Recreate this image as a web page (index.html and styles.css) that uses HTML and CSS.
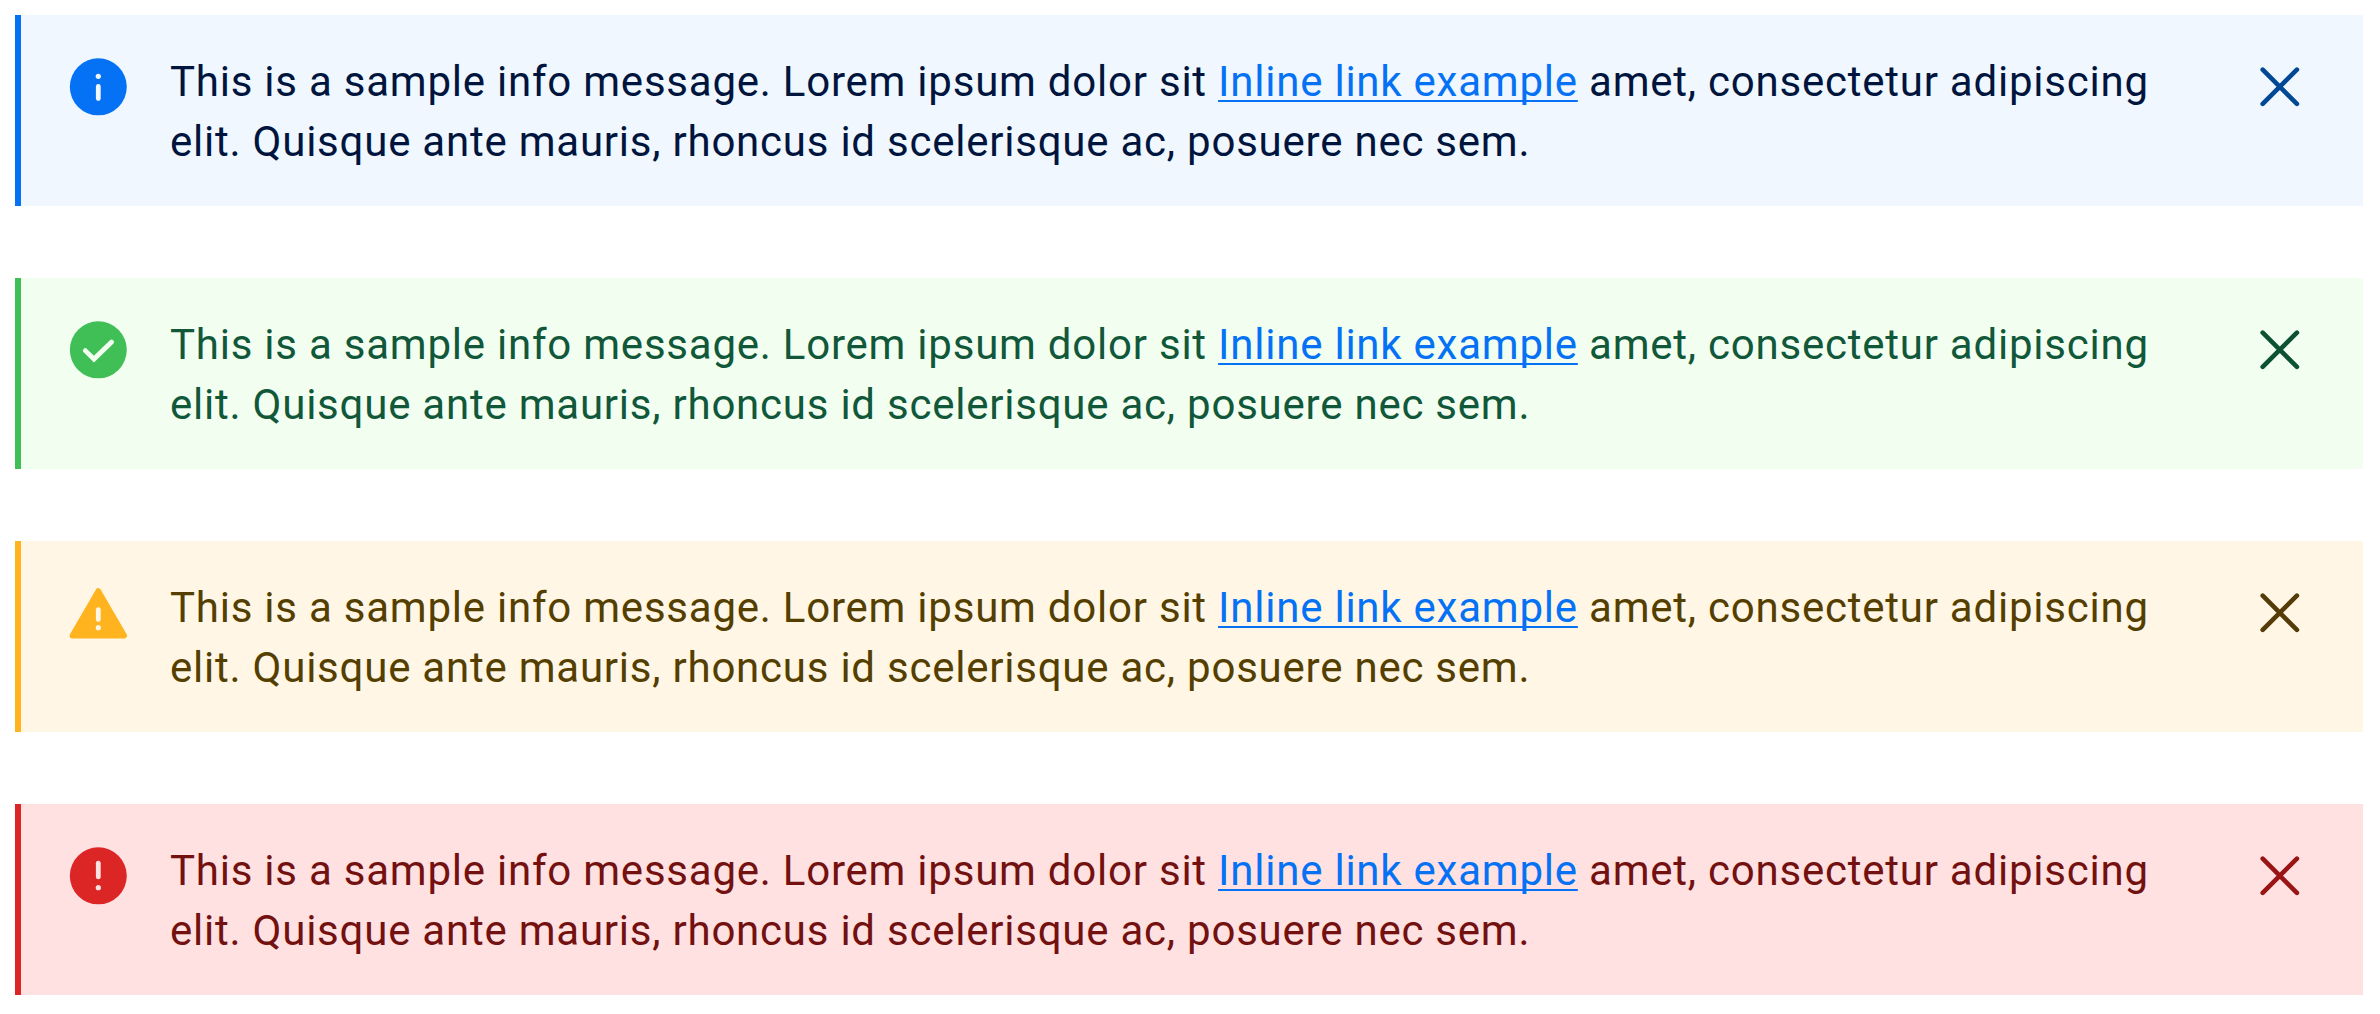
FILE: index.html
```html
<!DOCTYPE html>
<html lang="en">
<head>
<meta charset="utf-8">
<title>Alerts</title>
<link rel="stylesheet" href="styles.css">
</head>
<body>
<main class="alerts">
<section class="alert info">
<svg class="icon" viewBox="0 0 58 58"><circle class="shape" cx="29.3" cy="28.8" r="28.5"/><path class="mark" d="M29.3 28.4v12.2"/><circle class="dot" cx="29.3" cy="18.3" r="2.6"/></svg>
<p class="message">This is a sample info message. Lorem ipsum dolor sit <a class="link" href="#">Inline link example</a> amet, consectetur adipiscing elit. Quisque ante mauris, rhoncus id scelerisque ac, posuere nec sem.</p>
<button class="close" aria-label="Close"><svg class="cross" viewBox="0 0 40 40"><path d="M2.7 2.7l34.2 34.2M36.9 2.7L2.7 36.9"/></svg></button>
</section>
<section class="alert success">
<svg class="icon" viewBox="0 0 58 58"><circle class="shape" cx="29.3" cy="28.8" r="28.5"/><path class="mark" d="M16.3 29.6l8.7 8.5 17.6-17"/></svg>
<p class="message">This is a sample info message. Lorem ipsum dolor sit <a class="link" href="#">Inline link example</a> amet, consectetur adipiscing elit. Quisque ante mauris, rhoncus id scelerisque ac, posuere nec sem.</p>
<button class="close" aria-label="Close"><svg class="cross" viewBox="0 0 40 40"><path d="M2.7 2.7l34.2 34.2M36.9 2.7L2.7 36.9"/></svg></button>
</section>
<section class="alert warning">
<svg class="icon" viewBox="0 0 58 58"><path class="shape rounded" d="M29.3 6.9L55.3 51.7H3.3z"/><path class="mark" d="M29.3 25.6v10"/><circle class="dot" cx="29.3" cy="43.7" r="2.6"/></svg>
<p class="message">This is a sample info message. Lorem ipsum dolor sit <a class="link" href="#">Inline link example</a> amet, consectetur adipiscing elit. Quisque ante mauris, rhoncus id scelerisque ac, posuere nec sem.</p>
<button class="close" aria-label="Close"><svg class="cross" viewBox="0 0 40 40"><path d="M2.7 2.7l34.2 34.2M36.9 2.7L2.7 36.9"/></svg></button>
</section>
<section class="alert error">
<svg class="icon" viewBox="0 0 58 58"><circle class="shape" cx="29.3" cy="28.8" r="28.5"/><path class="mark" d="M29.3 16.2v13.7"/><circle class="dot" cx="29.3" cy="40.7" r="2.6"/></svg>
<p class="message">This is a sample info message. Lorem ipsum dolor sit <a class="link" href="#">Inline link example</a> amet, consectetur adipiscing elit. Quisque ante mauris, rhoncus id scelerisque ac, posuere nec sem.</p>
<button class="close" aria-label="Close"><svg class="cross" viewBox="0 0 40 40"><path d="M2.7 2.7l34.2 34.2M36.9 2.7L2.7 36.9"/></svg></button>
</section>
</main>
</body>
</html>
```
FILE: styles.css
```css
* { box-sizing: border-box; }
body { margin: 0; background: #fff; font-family: Roboto, sans-serif; }
.alerts { display: flex; flex-direction: column; gap: 72px; padding: 15px 17px 0 15px; }
.alert { display: flex; align-items: flex-start; height: 191px; padding: 37px 63px 0 48px; border-left: 6px solid var(--accent); background: var(--bg); color: var(--text); }
.icon { flex: none; width: 58px; height: 58px; margin-top: 6px; overflow: visible; }
.shape { fill: var(--accent); }
.rounded { stroke: var(--accent); stroke-width: 5.4; stroke-linejoin: round; }
.mark { fill: none; stroke: var(--bg); stroke-width: 4.8; stroke-linecap: round; }
.dot { fill: var(--bg); }
.message { flex: none; width: 2030px; margin: 0 0 0 43px; font-size: 42px; line-height: 60px; letter-spacing: 0.77px; }
.link { color: #0572f5; text-decoration: underline; text-decoration-thickness: 2px; text-underline-offset: 4px; text-decoration-skip-ink: none; }
.close { margin: 15px 0 0 auto; padding: 0; border: 0; background: none; color: var(--cross); }
.cross { display: block; width: 40px; height: 40px; fill: none; stroke: currentColor; stroke-width: 4.6; stroke-linecap: round; }
.info { --accent: #0572f5; --bg: #f0f7ff; --text: #00153d; --cross: #004893; }
.success { --accent: #40bf57; --bg: #f2fff0; --text: #11583a; --cross: #0c5132; }
.warning { --accent: #ffb31f; --bg: #fff6e5; --text: #543f00; --cross: #543b08; }
.error { --accent: #dc2626; --bg: #ffe1e1; --text: #731010; --cross: #991515; }
```
